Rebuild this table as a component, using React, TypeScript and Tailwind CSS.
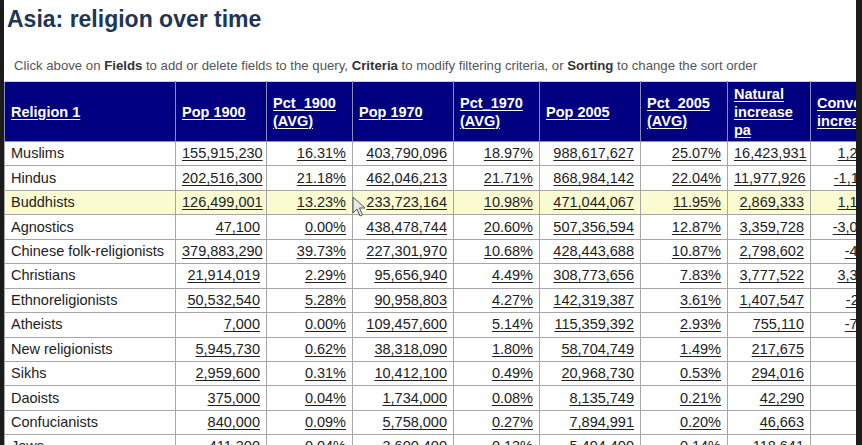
import React from "react";

type Row = [string, string, string, string, string, string, string, string, string];

const rows: Row[] = [
  ["Muslims", "155,915,230", "16.31%", "403,790,096", "18.97%", "988,617,627", "25.07%", "16,423,931", "1,234,702"],
  ["Hindus", "202,516,300", "21.18%", "462,046,213", "21.71%", "868,984,142", "22.04%", "11,977,926", "-1,124,611"],
  ["Buddhists", "126,499,001", "13.23%", "233,723,164", "10.98%", "471,044,067", "11.95%", "2,869,333", "1,108,215"],
  ["Agnostics", "47,100", "0.00%", "438,478,744", "20.60%", "507,356,594", "12.87%", "3,359,728", "-3,041,532"],
  ["Chinese folk-religionists", "379,883,290", "39.73%", "227,301,970", "10.68%", "428,443,688", "10.87%", "2,798,602", "-412,908"],
  ["Christians", "21,914,019", "2.29%", "95,656,940", "4.49%", "308,773,656", "7.83%", "3,777,522", "3,315,040"],
  ["Ethnoreligionists", "50,532,540", "5.28%", "90,958,803", "4.27%", "142,319,387", "3.61%", "1,407,547", "-224,113"],
  ["Atheists", "7,000", "0.00%", "109,457,600", "5.14%", "115,359,392", "2.93%", "755,110", "-731,842"],
  ["New religionists", "5,945,730", "0.62%", "38,318,090", "1.80%", "58,704,749", "1.49%", "217,675", "12,310"],
  ["Sikhs", "2,959,600", "0.31%", "10,412,100", "0.49%", "20,968,730", "0.53%", "294,016", "8,412"],
  ["Daoists", "375,000", "0.04%", "1,734,000", "0.08%", "8,135,749", "0.21%", "42,290", "1,205"],
  ["Confucianists", "840,000", "0.09%", "5,758,000", "0.27%", "7,894,991", "0.20%", "46,663", "2,118"],
  ["Jews", "411,300", "0.04%", "3,600,400", "0.13%", "5,494,400", "0.14%", "118,641", "4,067"],
];

const headers: string[][] = [
  ["Religion 1"],
  ["Pop 1900"],
  ["Pct_1900", "(AVG)"],
  ["Pop 1970"],
  ["Pct_1970", "(AVG)"],
  ["Pop 2005"],
  ["Pct_2005", "(AVG)"],
  ["Natural", "increase", "pa"],
  ["Conversion", "increase"],
];

const widths = [171, 91, 86, 101, 86, 101, 87, 83, 98];

export default function App() {
  return (
    <div
      className="w-[862px] h-[445px] overflow-hidden flex bg-white relative"
      style={{ fontFamily: '"Liberation Sans", Arial, sans-serif' }}
    >
      <div className="w-[4px] shrink-0 bg-[#1b1b1b]" />
      <div className="flex-1 min-w-0 overflow-hidden bg-white">
        <h1 className="pl-[3px] pt-[6px] h-[34px] text-[23px] leading-[26px] font-bold text-[#1d3656]">
          Asia: religion over time
        </h1>
        <p className="pl-[10px] pt-[24px] h-[47px] text-[13.2px] leading-[15px] text-[#555555]">
          Click above on <b className="text-[#333]">Fields</b> to add or delete fields to the query,{" "}
          <b className="text-[#333]">Criteria</b> to modify filtering criteria, or{" "}
          <b className="text-[#333]">Sorting</b> to change the sort order
        </p>
        <table className="table-fixed border-collapse w-[904px] text-[14.5px] text-[#222]">
          <colgroup>
            {widths.map((w, i) => (
              <col key={i} style={{ width: w }} />
            ))}
          </colgroup>
          <thead>
            <tr className="h-[60px] bg-[#000080]">
              {headers.map((h, i) => (
                <th
                  key={i}
                  className="border border-[#8a8ab8] border-t-[#d0d0d8] text-left align-middle px-[6px] text-white font-bold text-[14.5px] leading-[18px]"
                >
                  <span className="underline underline-offset-2 decoration-1">
                    {h.map((l, j) => (
                      <React.Fragment key={j}>
                        {j > 0 && <br />}
                        {l}
                      </React.Fragment>
                    ))}
                  </span>
                </th>
              ))}
            </tr>
          </thead>
          <tbody>
            {rows.map((r, i) => (
              <tr key={i} className={`h-[24.45px] ${i === 2 ? "bg-[#fbfbd2]" : "bg-white"}`}>
                {r.map((c, j) => (
                  <td
                    key={j}
                    className={`border border-[#a6a6a6] px-[6px] py-0 leading-[17px] whitespace-nowrap overflow-hidden ${
                      j === 0 ? "text-left pl-[6px]" : "text-right pr-[6px]"
                    }`}
                  >
                    {j === 0 ? c : <span className="underline underline-offset-2 decoration-1">{c}</span>}
                  </td>
                ))}
              </tr>
            ))}
          </tbody>
        </table>
      </div>
      <div className="w-[6px] shrink-0 bg-[#1b1b1b]" />
      <svg
        className="absolute left-[352px] top-[196px]"
        width="14"
        height="22"
        viewBox="0 0 14 22"
      >
        <path
          d="M1 1 L1 17 L5 13 L8 20 L10.5 19 L7.5 12 L13 12 Z"
          fill="#e8e8e8"
          stroke="#555"
          strokeWidth="1"
          strokeLinejoin="round"
        />
      </svg>
    </div>
  );
}
